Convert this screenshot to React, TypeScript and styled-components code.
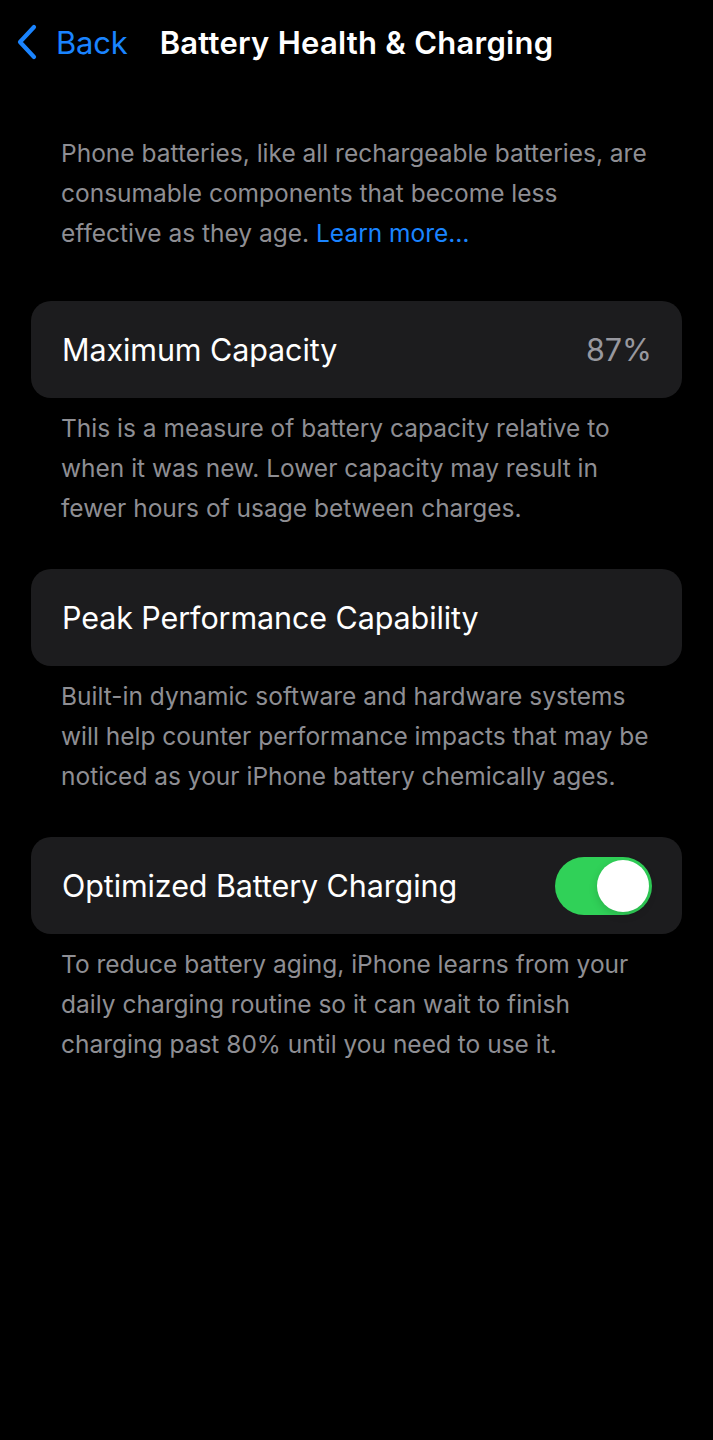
import { ReactNode } from 'react';
import styled, { createGlobalStyle } from 'styled-components';

const GlobalStyle = createGlobalStyle`
  html, body {
    margin: 0;
    padding: 0;
    background: #000;
  }
  body {
    font-family: Inter, "Noto Sans", sans-serif;
    -webkit-font-smoothing: antialiased;
  }
`;

const Screen = styled.div`
  min-height: 1440px;
  background: #000;
  color: #fff;
`;

const NavBar = styled.header`
  display: flex;
  align-items: center;
  height: 84px;
  padding-left: 16px;
`;

const BackButton = styled.button`
  display: flex;
  align-items: center;
  gap: 18px;
  background: none;
  border: none;
  padding: 0;
  color: #1a84ff;
  font-family: inherit;
  font-size: 31px;
  letter-spacing: -0.2px;
  cursor: pointer;
`;

const NavTitle = styled.h1`
  margin: 0 0 0 32px;
  font-size: 31px;
  font-weight: 600;
  letter-spacing: 0.25px;
`;

const Content = styled.main`
  display: flex;
  flex-direction: column;
  padding: 49px 31px 0;
`;

const Note = styled.p<{ $top?: number; $bottom?: number }>`
  margin: ${p => p.$top ?? 10}px 0 ${p => p.$bottom ?? 41}px;
  padding: 0 30px;
  color: #8e8e93;
  font-size: 24.5px;
  line-height: 40px;
`;

const Link = styled.a`
  color: #1a84ff;
  text-decoration: none;
`;

const Cell = styled.div`
  display: flex;
  align-items: center;
  justify-content: space-between;
  height: 97px;
  padding: 0 30px 0 31px;
  border-radius: 20px;
  background: #1c1c1e;
`;

const CellLabel = styled.span`
  font-size: 30.5px;
  letter-spacing: -0.1px;
`;

const CellValue = styled.span`
  color: #98989f;
  font-size: 30.5px;
  letter-spacing: 0;
`;

const Toggle = styled.span<{ $on: boolean }>`
  position: relative;
  display: inline-block;
  width: 97px;
  height: 58px;
  border-radius: 29px;
  background: ${p => (p.$on ? '#30d158' : '#39393d')};

  &::after {
    content: '';
    position: absolute;
    top: 3px;
    left: ${p => (p.$on ? '42px' : '3px')};
    width: 52px;
    height: 52px;
    border-radius: 50%;
    background: #fff;
    box-shadow: 0 3px 8px rgba(0, 0, 0, 0.15);
  }
`;

const Chevron = () => (
  <svg width="22" height="36" viewBox="0 0 22 36" fill="none">
    <path d="M18 3 L4 18 L18 33" stroke="currentColor" strokeWidth="4.2" strokeLinecap="round" strokeLinejoin="round" />
  </svg>
);

const Row = ({ label, children }: { label: string; children?: ReactNode }) => (
  <Cell>
    <CellLabel>{label}</CellLabel>
    {children}
  </Cell>
);

export default function App() {
  return (
    <Screen>
      <GlobalStyle />
      <NavBar>
        <BackButton>
          <Chevron />
          Back
        </BackButton>
        <NavTitle>Battery Health &amp; Charging</NavTitle>
      </NavBar>
      <Content>
        <Note $top={0} $bottom={48}>
          Phone batteries, like all rechargeable batteries, are consumable components that become less
          effective as they age. <Link href="#">Learn more…</Link>
        </Note>
        <Row label="Maximum Capacity">
          <CellValue>87%</CellValue>
        </Row>
        <Note>
          This is a measure of battery capacity relative to when it was new. Lower capacity may result in
          fewer hours of usage between charges.
        </Note>
        <Row label="Peak Performance Capability" />
        <Note>
          Built-in dynamic software and hardware systems will help counter performance impacts that may be
          noticed as your iPhone battery chemically ages.
        </Note>
        <Row label="Optimized Battery Charging">
          <Toggle $on />
        </Row>
        <Note>
          To reduce battery aging, iPhone learns from your daily charging routine so it can wait to finish
          charging past 80% until you need to use it.
        </Note>
      </Content>
    </Screen>
  );
}
